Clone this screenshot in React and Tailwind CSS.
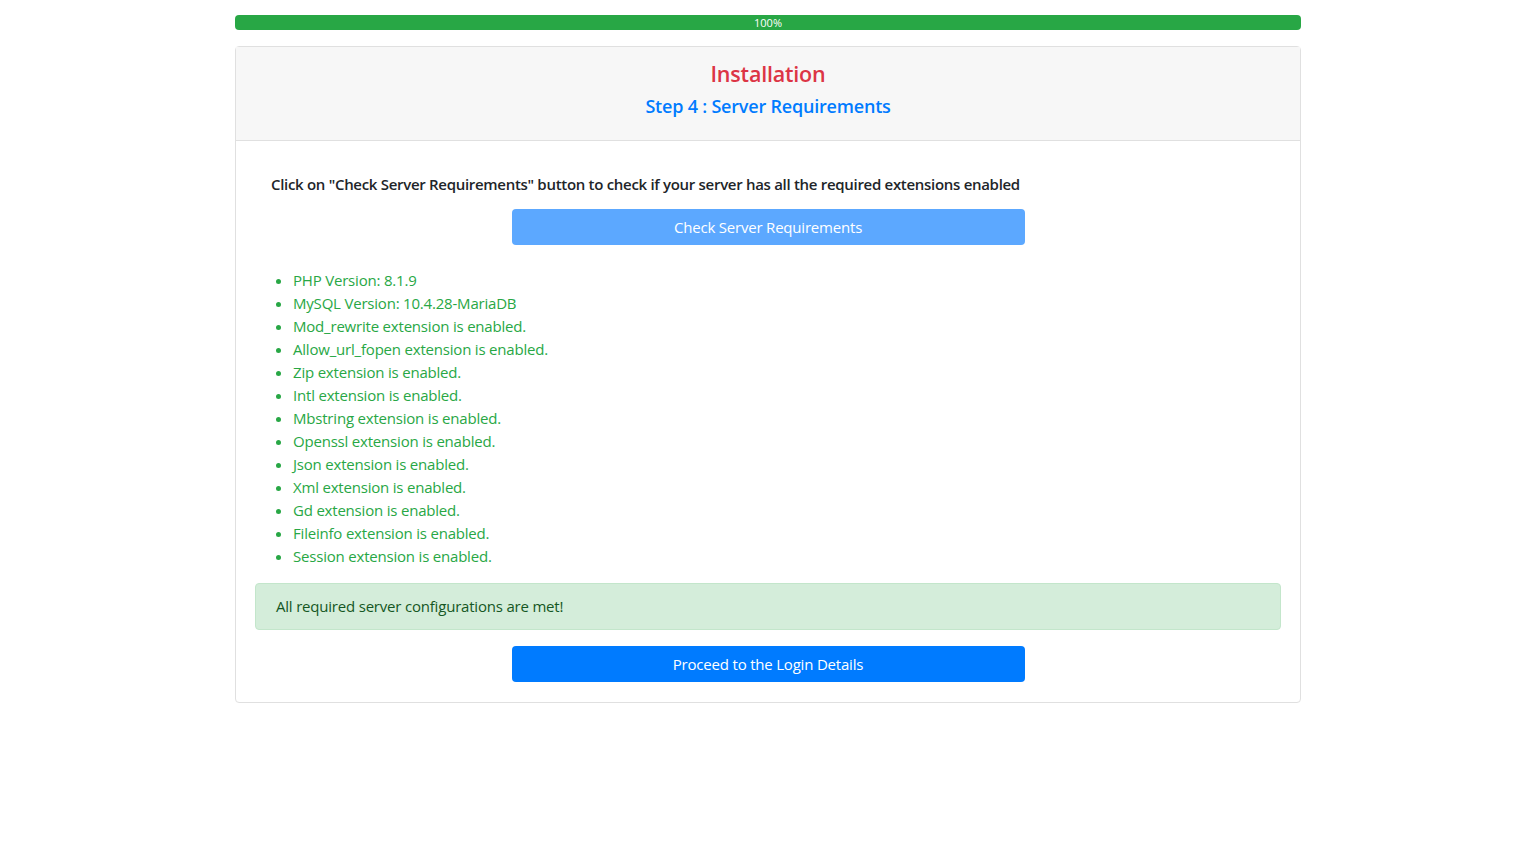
const items = [
  "PHP Version: 8.1.9",
  "MySQL Version: 10.4.28-MariaDB",
  "Mod_rewrite extension is enabled.",
  "Allow_url_fopen extension is enabled.",
  "Zip extension is enabled.",
  "Intl extension is enabled.",
  "Mbstring extension is enabled.",
  "Openssl extension is enabled.",
  "Json extension is enabled.",
  "Xml extension is enabled.",
  "Gd extension is enabled.",
  "Fileinfo extension is enabled.",
  "Session extension is enabled.",
];

export default function App() {
  return (
    <div className="min-h-screen bg-white font-['Open_Sans',sans-serif] text-[15px] text-[#212529] tracking-[-0.2px]">
      <div className="mx-auto w-[1066px] pt-[15px]">
        {/* progress */}
        <div className="h-[15px] w-full rounded-[4px] bg-[#e9ecef] overflow-hidden">
          <div className="h-full w-full bg-[#28a745] flex items-center justify-center text-[11px] leading-none text-white tracking-normal">
            100%
          </div>
        </div>

        <div className="mt-[16px] rounded-[4px] border border-[#e0e0e0]">
          <div className="bg-[#f7f7f7] border-b border-[#e0e0e0] h-[94px] flex flex-col items-center pt-[11px]">
            <h3 className="text-[21.5px] font-semibold leading-[32px] text-[#dc3545]">Installation</h3>
            <h5 className="text-[18px] font-semibold leading-[32px] text-[#007bff]">Step 4 : Server Requirements</h5>
          </div>

          <div className="px-[19px] pt-[32px] pb-[20px]">
            <div className="px-[16px]">
              <p className="font-semibold leading-[22px] tracking-[-0.3px]">
                Click on "Check Server Requirements" button to check if your server has all the required extensions enabled
              </p>
              <div className="mt-[14px] flex justify-center">
                <button className="w-[513px] h-[36px] rounded-[4px] bg-[#5ca8ff] text-white text-[15px]">
                  Check Server Requirements
                </button>
              </div>
              <ul className="mt-[24px] list-disc pl-[22px] text-[#28a745] leading-[23px]">
                {items.map((t) => (
                  <li key={t} className="marker:text-[#28a745]">{t}</li>
                ))}
              </ul>
            </div>

            <div className="mt-[15px] h-[47px] rounded-[4px] border border-[#c3e6cb] bg-[#d4edda] px-5 flex items-center text-[#155724]">
              All required server configurations are met!
            </div>

            <div className="mt-[16px] flex justify-center">
              <button className="w-[513px] h-[36px] rounded-[4px] bg-[#007bff] text-white text-[15px]">
                Proceed to the Login Details
              </button>
            </div>
          </div>
        </div>
      </div>
    </div>
  );
}
